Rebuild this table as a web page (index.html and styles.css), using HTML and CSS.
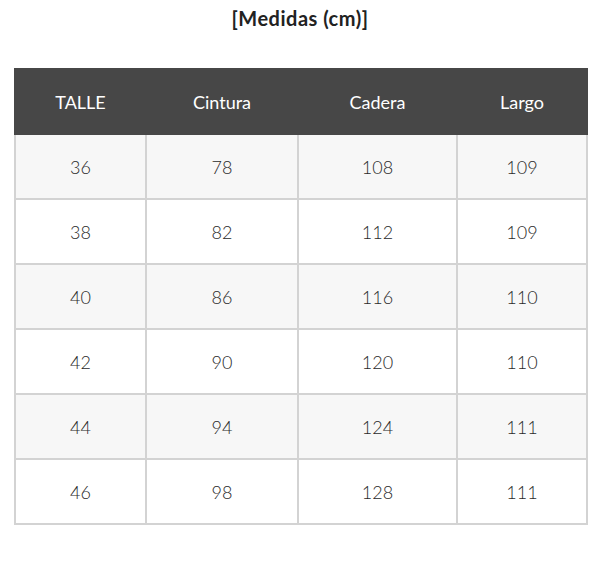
FILE: index.html
```html
<!DOCTYPE html>
<html lang="es">
<head>
<meta charset="utf-8">
<link rel="stylesheet" href="styles.css">
</head>
<body>
<h2 class="title">[Medidas (cm)]</h2>
<table class="sizes">
  <colgroup>
    <col class="c1"><col class="c2"><col class="c3"><col class="c4">
  </colgroup>
  <thead>
    <tr><th>TALLE</th><th>Cintura</th><th>Cadera</th><th>Largo</th></tr>
  </thead>
  <tbody>
    <tr><td>36</td><td>78</td><td>108</td><td>109</td></tr>
    <tr><td>38</td><td>82</td><td>112</td><td>109</td></tr>
    <tr><td>40</td><td>86</td><td>116</td><td>110</td></tr>
    <tr><td>42</td><td>90</td><td>120</td><td>110</td></tr>
    <tr><td>44</td><td>94</td><td>124</td><td>111</td></tr>
    <tr><td>46</td><td>98</td><td>128</td><td>111</td></tr>
  </tbody>
</table>
</body>
</html>
```
FILE: styles.css
```css
html, body {
  margin: 0;
  padding: 0;
  background: #fff;
  font-family: "Lato", "Liberation Sans", sans-serif;
  color: #333;
}
.title {
  margin: 0;
  padding-top: 6px;
  height: 68px;
  box-sizing: border-box;
  text-align: center;
  font-size: 20px;
  font-weight: 700;
  color: #222;
  letter-spacing: 0.5px;
}
.sizes {
  margin: 0 0 0 14px;
  width: 572px;
  border-collapse: collapse;
  table-layout: fixed;
}
.c1 { width: 131px; }
.c2 { width: 152px; }
.c3 { width: 159px; }
.c4 { width: 130px; }
.sizes th {
  background: #474747;
  color: #fff;
  font-weight: 400;
  font-size: 18px;
  height: 63px;
  border: 2px solid #474747;
  padding: 0;
}
.sizes td {
  border: 2px solid #d3d3d3;
  height: 63px;
  padding: 0;
  text-align: center;
  font-size: 18px;
  font-weight: 300;
  color: #2a2a2a;
}
.sizes tbody tr:nth-child(odd) td { background: #f7f7f7; }
.sizes tbody tr:nth-child(even) td { background: #fff; }
```
